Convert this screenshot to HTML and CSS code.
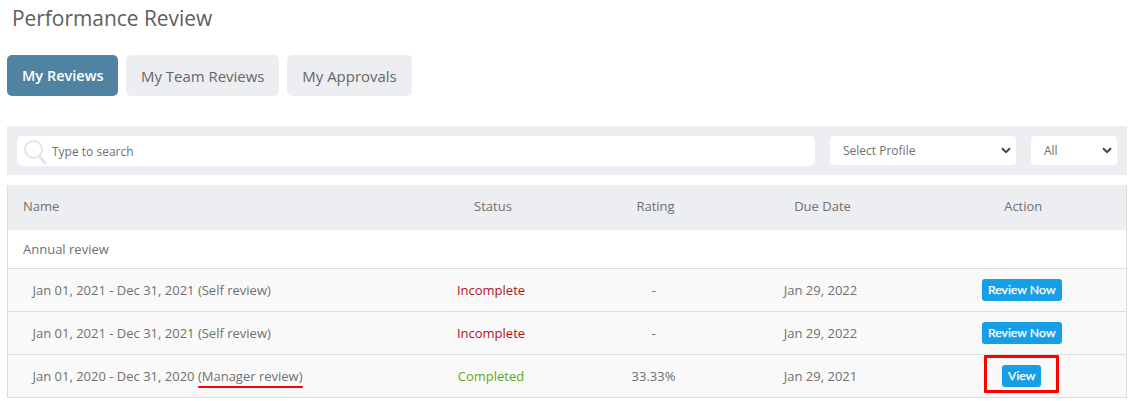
FILE: index.html
```html
<!DOCTYPE html>
<html lang="en">
<head>
<meta charset="utf-8">
<title>Performance Review</title>
<link rel="stylesheet" href="styles.css">
</head>
<body>
<main class="page">
  <h1 class="title">Performance Review</h1>
  <nav class="tabs">
    <a class="tab tab-active">My Reviews</a>
    <a class="tab">My Team Reviews</a>
    <a class="tab">My Approvals</a>
  </nav>
  <section class="filters">
    <div class="search">
      <svg class="search-icon" width="24" height="26" viewBox="0 0 24 26" fill="none" stroke="#e3e5ea">
        <circle cx="10.5" cy="10.5" r="8.5" stroke-width="2"/>
        <path d="M16.5 17.5 L22 24" stroke-width="3" stroke-linecap="round"/>
      </svg>
      <span class="search-text">Type to search</span>
    </div>
    <div class="select select-profile"><span>Select Profile</span><svg class="chev" width="10" height="7" viewBox="0 0 10 7" fill="none" stroke="#444" stroke-width="2"><path d="M1 1.2 L5 5.2 L9 1.2"/></svg></div>
    <div class="select select-all"><span>All</span><svg class="chev" width="10" height="7" viewBox="0 0 10 7" fill="none" stroke="#444" stroke-width="2"><path d="M1 1.2 L5 5.2 L9 1.2"/></svg></div>
  </section>
  <table class="grid">
    <colgroup>
      <col class="c-name"><col class="c-status"><col class="c-rating"><col class="c-due"><col class="c-action">
    </colgroup>
    <thead>
      <tr><th class="left">Name</th><th>Status</th><th>Rating</th><th>Due Date</th><th class="action-head">Action</th></tr>
    </thead>
    <tbody>
      <tr class="group"><td colspan="5" class="left">Annual review</td></tr>
      <tr class="row">
        <td class="period">Jan 01, 2021 - Dec 31, 2021 (Self review)</td>
        <td class="bad">Incomplete</td><td>-</td><td>Jan 29, 2022</td>
        <td class="action"><a class="btn">Review Now</a></td>
      </tr>
      <tr class="row">
        <td class="period">Jan 01, 2021 - Dec 31, 2021 (Self review)</td>
        <td class="bad">Incomplete</td><td>-</td><td>Jan 29, 2022</td>
        <td class="action"><a class="btn">Review Now</a></td>
      </tr>
      <tr class="row">
        <td class="period">Jan 01, 2020 - Dec 31, 2020 <span class="underlined">(Manager review)</span></td>
        <td class="good">Completed</td><td>33.33%</td><td>Jan 29, 2021</td>
        <td class="action"><span class="boxed"><a class="btn">View</a></span></td>
      </tr>
    </tbody>
  </table>
</main>
</body>
</html>
```

FILE: styles.css
```css
* { box-sizing: border-box; }
html, body { margin: 0; padding: 0; background: #fff; overflow: hidden; }
body { font-family: "Open Sans", sans-serif; font-size: 13px; color: #555; }
.page { width: 1134px; height: 401px; padding: 0 7px; overflow: hidden; }
.title { margin: 0 0 0 5px; height: 55px; padding-top: 3px; font-size: 20.9px; line-height: 30px; font-weight: 400; color: #5e5e5e; }
.tabs { display: flex; gap: 8px; height: 41px; }
.tab { display: flex; align-items: center; padding: 0 15px; border-radius: 5px; background: #edeef2; color: #666; font-size: 14.95px; white-space: nowrap; }
.tab-active { background: #5082a2; color: #fff; font-weight: 600; font-size: 14.5px; width: 111px; }
.filters { display: flex; align-items: flex-start; margin-top: 30px; height: 49px; padding: 10px; background: #edeef2; }
.search { display: flex; align-items: center; width: 798px; height: 30px; background: #fff; border-radius: 5px; padding-left: 6px; }
.search-icon { flex: none; margin-top: 1px; }
.search-text { margin-left: 5px; font-size: 12px; color: #707070; }
.select { display: flex; align-items: center; justify-content: space-between; height: 29px; background: #fff; border-radius: 4px; padding: 0 5px 0 13px; font-size: 12px; color: #707070; }
.select-profile { width: 186px; margin-left: 15px; }
.select-all { width: 86px; margin-left: 15px; }
.chev { flex: none; }
.grid { width: 100%; margin-top: 10px; border-collapse: collapse; table-layout: fixed; border-left: 1px solid #ddd; border-right: 1px solid #ddd; }
.c-name { width: 386px; }
.c-status { width: 195px; }
.c-rating { width: 130px; }
.c-due { width: 204px; }
.grid th { height: 45px; padding: 0 0 4px 4px; background: #edeef2; font-weight: 400; font-size: 13px; color: #707070; text-align: center; }
.grid td { padding: 0; text-align: center; font-size: 13px; color: #707070; }
.grid .left { text-align: left; padding-left: 15px; }
.grid .action-head { padding-left: 0; padding-right: 2px; }
.grid .action { padding-right: 5px; }
.group td { height: 38px; background: #fff; }
.row td { height: 43px; background: #f9f9f9; border-top: 1px solid #ddd; border-bottom: 1px solid #ddd; }
.grid .period { text-align: left; padding-left: 24.5px; }
.grid .bad { color: #b31217; }
.grid .good { color: #5fa81c; }
.btn { display: inline-block; padding: 0 6px; height: 22px; line-height: 22px; border-radius: 3px; background: #169fe6; color: #fff; font-family: "Lato", sans-serif; font-size: 12.3px; font-weight: 400; -webkit-text-stroke: 0.25px #fff; vertical-align: middle; }
.underlined { position: relative; }
.underlined::after { content: ""; position: absolute; left: 0; right: 0; bottom: -3px; height: 2px; border-radius: 1px; background: #f00; }
.boxed { position: relative; display: inline-block; vertical-align: middle; }
.boxed::after { content: ""; position: absolute; left: -18px; right: -18px; top: -10px; bottom: -6px; border: 3px solid #f00; border-radius: 1px; }
```
